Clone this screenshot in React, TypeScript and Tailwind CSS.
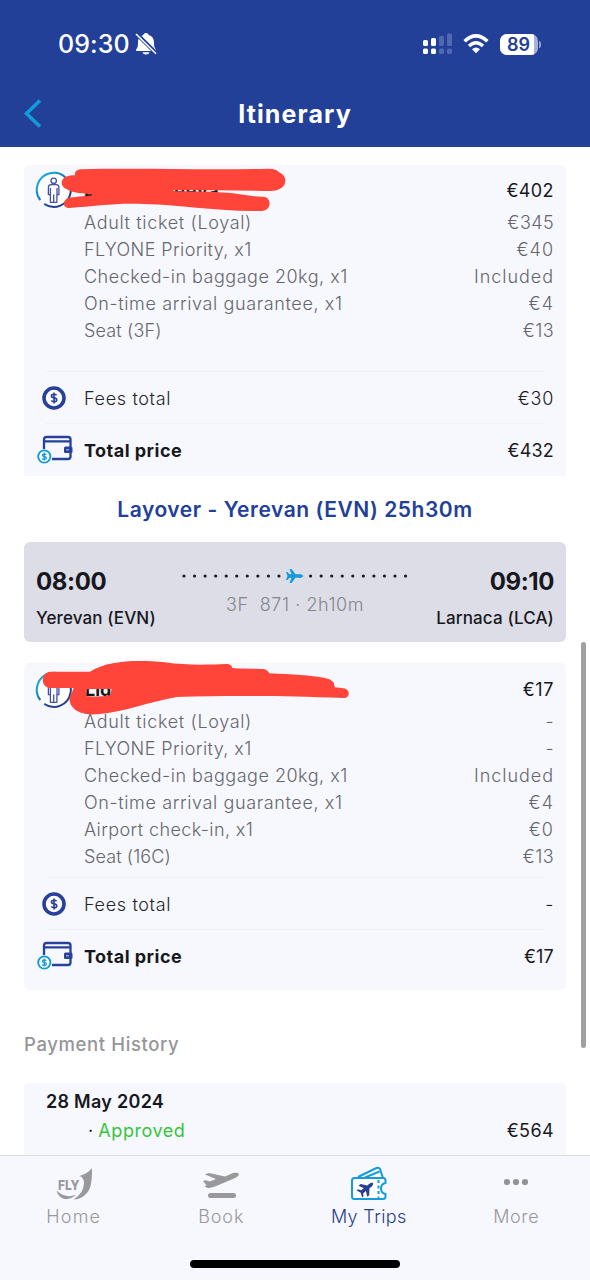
import React from "react";

type Line = { label: string; value: string; track?: string; valueTrack?: string };

function PersonIcon() {
  return (
    <svg width="38" height="38" viewBox="0 0 38 38" fill="none" className="shrink-0">
      <defs>
        <linearGradient id="ring" x1="0" y1="0" x2="1" y2="1">
          <stop offset="0.2" stopColor="#18a5d6" />
          <stop offset="0.7" stopColor="#27408f" />
        </linearGradient>
      </defs>
      <circle cx="19" cy="19" r="16" fill="#fff" />
      <path d="M5.3 29.2A17 17 0 1 1 9.2 32.9" stroke="url(#ring)" strokeWidth="2" />
      <g stroke="#4450a5" strokeWidth="1.3" strokeLinejoin="round">
        <circle cx="18.7" cy="9.8" r="2.7" />
        <path d="M16.2 13.7h5q2.700 0 2.700 2.800v7.200h-2v7.600h-6.500v-7.600h-2v-7.200q0-2.800 2.800-2.800ZM15.400 17v7M22 17v7M18.700 23.500v7.600" />
      </g>
    </svg>
  );
}

function CoinIcon() {
  return (
    <svg width="24" height="24" viewBox="0 0 24 24" fill="none">
      <circle cx="12" cy="12" r="10" fill="#fff" stroke="#27409b" strokeWidth="3.6" />
      <path d="M14.600 9.300q-.9-1.100-2.600-1.100c-3.500 0-3.500 3.200 0 3.700 3.700.5 3.700 3.900 0 3.900q-1.700 0-2.700-1.200M12 6.600v10.800" stroke="#27409b" strokeWidth="1.6" />
    </svg>
  );
}

function WalletIcon() {
  return (
    <svg width="37" height="30" viewBox="0 0 37 30" fill="none">
      <path d="M7 14V4.500Q7 2 9.500 2H31q2.500 0 2.500 2.500v17Q33.500 24 31 24H15M7 6.300h26" stroke="#27409b" strokeWidth="2.3" />
      <rect x="27" y="11.500" width="8.500" height="6.500" rx="1.500" fill="#27409b" />
      <rect x="29" y="14" width="3" height="1.500" fill="#8a98d0" />
      <circle cx="7.300" cy="21.500" r="6.100" fill="#fff" stroke="#139bd7" strokeWidth="1.900" />
      <path d="M9.300 19.700q-.7-.8-2-.8c-2.600 0-2.600 2.300 0 2.600 2.800.3 2.800 2.900 0 2.900q-1.400 0-2.200-.9M7.300 17.600v7.900" stroke="#139bd7" strokeWidth="1.300" />
    </svg>
  );
}

function Detail({ label, value, track = "tracking-[0.4px]", valueTrack = "tracking-[0.4px]" }: Line) {
  return (
    <div className="flex h-[27px] items-center justify-between pl-[60px] pr-[12px] text-[18px] font-light text-[#65666d]">
      <span className={track}>{label}</span>
      <span className={valueTrack}>{value}</span>
    </div>
  );
}

function Totals({ fees, total }: { fees: string; total: string }) {
  return (
    <>
      <div className="ml-[22px] mr-[21px] h-px bg-[#f0f1f7]" />
      <div className="flex h-[51px] items-center pl-[18px] pr-[12px] pt-px text-[18px]">
        <CoinIcon />
        <span className="ml-[18px] grow font-light tracking-[0.66px] text-[#25262b]">Fees total</span>
        <span className="font-light tracking-[0.7px] text-[#191a20]">{fees}</span>
      </div>
      <div className="ml-[22px] mr-[21px] h-px bg-[#f0f1f7]" />
      <div className="flex h-[52px] items-center pl-[13px] pr-[12px] text-[18px]">
        <WalletIcon />
        <span className="ml-[10px] grow font-bold tracking-[0.48px] text-[#17181d]">Total price</span>
        <span className="tracking-[0.2px] text-[#191a20]">{total}</span>
      </div>
    </>
  );
}

function Tab({ icon, label, active, track }: { icon: React.ReactNode; label: string; active?: boolean; track: string }) {
  return (
    <div className={`flex w-[147.500px] flex-col items-center ${active ? "text-[#293c92]" : "text-[#98989d]"}`}>
      <div className="flex h-[43px] items-end justify-center">{icon}</div>
      <div className={`mt-[2px] text-[18px] font-light leading-[26px] ${track}`}>{label}</div>
    </div>
  );
}

const first: Line[] = [
  { label: "Adult ticket (Loyal)", value: "€345", track: "tracking-[0.65px]" },
  { label: "FLYONE Priority, x1", value: "€40", track: "tracking-[0.42px]", valueTrack: "tracking-[1px]" },
  { label: "Checked-in baggage 20kg, x1", value: "Included", track: "tracking-[0.5px]", valueTrack: "tracking-[0.95px]" },
  { label: "On-time arrival guarantee, x1", value: "€4", track: "tracking-[0.62px]", valueTrack: "tracking-[1px]" },
  { label: "Seat (3F)", value: "€13", track: "tracking-[0.15px]" },
];

const second: Line[] = [
  { label: "Adult ticket (Loyal)", value: "-", track: "tracking-[0.65px]" },
  { label: "FLYONE Priority, x1", value: "-", track: "tracking-[0.42px]" },
  { label: "Checked-in baggage 20kg, x1", value: "Included", track: "tracking-[0.5px]", valueTrack: "tracking-[0.95px]" },
  { label: "On-time arrival guarantee, x1", value: "€4", track: "tracking-[0.62px]", valueTrack: "tracking-[1px]" },
  { label: "Airport check-in, x1", value: "€0", valueTrack: "tracking-[1px]" },
  { label: "Seat (16C)", value: "€13", track: "tracking-[0.1px]" },
];

export default function App() {
  return (
    <div className="flex h-[1280px] w-[590px] flex-col overflow-hidden bg-white font-['Inter',sans-serif] text-[#17181d]">
      <header className="h-[147px] shrink-0 bg-[#224098] text-white">
        <div className="flex h-[88px] items-center pl-[58px] pr-[49px]">
          <span className="text-[25px] font-medium leading-none tracking-[0.1px]">09:30</span>
          <svg width="22" height="24" viewBox="0 0 22 24" className="ml-[5px]">
            <path d="M11 1C9.200 1 8.500 2.200 8.400 3 4.300 4 3 7.500 3 10.500c0 4-.5 5-1.800 7-.5.800 0 1.500.8 1.500h18c.8 0 1.300-.7.8-1.500-1.300-2-1.800-3-1.800-7 0-3-1.300-6.500-5.400-7.500-.1-.8-.8-2-2.600-2ZM7.500 20.200h7c-.5 3-6.500 3-7 0Z" fill="#fff" />
            <path d="M1.500 1.800L21 21" stroke="#224098" strokeWidth="4" />
            <path d="M1 2L21 21.700" stroke="#fff" strokeWidth="1.600" />
          </svg>
          <div className="ml-auto flex items-center">
            <svg width="31" height="22" viewBox="0 0 31 22" fill="#fff">
              <rect x="1" y="7" width="5" height="6" rx="1.500" />
              <rect x="9" y="5" width="5" height="8" rx="1.500" />
              <rect x="1" y="15.500" width="5" height="5.500" rx="1.500" />
              <rect x="9" y="15.500" width="5" height="5.500" rx="1.500" />
              <g fill="#5068b2">
                <rect x="17" y="3" width="5" height="10" rx="1.500" />
                <rect x="25" y="0.500" width="5" height="12.500" rx="1.500" />
                <rect x="17" y="15.500" width="5" height="5.500" rx="1.500" />
                <rect x="25" y="15.500" width="5" height="5.500" rx="1.500" />
              </g>
            </svg>
            <svg width="26" height="20" viewBox="0 0 26 20" fill="none" stroke="#fff" strokeWidth="3.400" className="ml-[10px]">
              <path d="M1.600 7.200Q13-3.500 24.400 7.200M6 12Q13 5.500 20 12" />
              <path d="M9 15.200q4-3.300 8 0l-4 4Z" fill="#fff" stroke="none" />
            </svg>
            <div className="ml-[11px] flex h-[21px] w-[38px] items-center overflow-hidden rounded-[7px] bg-[#a6b2da]">
              <div className="flex h-full w-[34px] items-center justify-center bg-white pl-[3px] text-[18px] font-semibold text-[#224098]">89</div>
            </div>
            <div className="ml-[1px] h-[7px] w-[2px] rounded-r-full bg-[#91a1ce]" />
          </div>
        </div>
        <div className="grid h-[52px] grid-cols-[80px_1fr_80px] items-center">
          <svg width="20" height="32" viewBox="0 0 20 32" fill="none" className="ml-[23px]">
            <path d="M17 2.500L3.500 15.500l13.500 13" stroke="#129bd9" strokeWidth="3.600" />
          </svg>
          <h1 className="pt-[2px] text-center text-[25px] font-bold tracking-[1.1px]">Itinerary</h1>
        </div>
      </header>

      <main className="relative h-[1008px] shrink-0 overflow-hidden px-[24px] pt-[18px]">
        <section className="relative h-[311px] rounded-t-[5px] bg-[#f7f8fe]">
          <div className="flex h-[44px] items-center pb-[1px] pl-[11px] pr-[12px] pt-[7px]">
            <PersonIcon />
            <span className="ml-[11px] text-[18px] font-bold">L</span>
            <span className="ml-[80px] text-[18px] font-bold tracking-[0.8px]">eeva</span>
            <span className="ml-auto text-[18px] tracking-[0.4px]">€402</span>
          </div>
          {first.map((l) => <Detail key={l.label} {...l} />)}
          <div className="h-[27px]" />
          <Totals fees="€30" total="€432" />
          <svg className="absolute -left-[4px] -top-[10px]" width="290" height="70" viewBox="0 0 870 210">
            <path fill="#ff453a" d="M165 61Q162 46 182 43C350 38 560 46 740 41Q770 40 777 52C808 64 803 108 750 108C650 106 550 105 462 105Q456 107 466 109C540 109 600 111 640 115C675 120 700 125 728 125C755 124 758 167 724 168C600 171 500 150 370 147C280 144 225 154 149 159C127 159 126 138 145 128L194 123V119L215 117C172 114 156 112 145 105C111 94 122 57 165 61Z" />
            <path d="M197 117.500h19v3l-19 3Z" fill="#17181d" />
          </svg>
        </section>

        <h2 className="flex h-[66px] items-center justify-center pt-[2px] text-[21px] font-semibold tracking-[0.54px] text-[#224098]">Layover - Yerevan (EVN) 25h30m</h2>

        <section className="flex h-[100px] justify-between rounded-[6px] bg-[#dddde7] px-[12px] pt-[23px]">
          <div className="w-[130px]">
            <div className="pt-px text-[24px] font-bold leading-[32px] tracking-[-0.35px]">08:00</div>
            <div className="mt-[8px] text-[17px] font-medium leading-[24px] tracking-[0.12px]">Yerevan (EVN)</div>
          </div>
          <div className="flex flex-col items-center">
            <svg width="228" height="20" viewBox="0 0 228 20">
              {Array.from({ length: 22 }, (_, i) => <circle key={i} cx={3 + i * 10.55} cy="11" r="1.600" fill="#191a20" />)}
              <g transform="translate(113.500 11)" fill="#149bda">
                <path d="M9 0Q8-1.700 5-1.700H1L-3-7h-2L-3-1.700h-2L-7-4h-1.500L-7 0-8.500 4H-7l2-2.300h2L-5 7h2L1 1.700H5Q8 1.700 9 0Z" />
              </g>
            </svg>
            <div className="mt-[6px] whitespace-pre text-[18px] font-light leading-[27px] tracking-[0.55px] text-[#85858d]">3F  871 · 2h10m</div>
          </div>
          <div className="w-[130px] text-right">
            <div className="pt-px text-[24px] font-bold leading-[32px] tracking-[-0.4px]">09:10</div>
            <div className="mt-[8px] text-[17px] font-medium leading-[24px] tracking-[0.14px]">Larnaca (LCA)</div>
          </div>
        </section>

        <section className="relative mt-[21px] h-[327px] rounded-[5px] bg-[#f7f8fe]">
          <div className="flex h-[45px] items-center pl-[11px] pr-[12px] pt-[8px]">
            <PersonIcon />
            <span className="ml-[12px] text-[18px] font-bold">Lid</span>
            <span className="ml-auto text-[18px] tracking-[0.6px]">€17</span>
          </div>
          {second.map((l) => <Detail key={l.label} {...l} />)}
          <div className="h-[7px]" />
          <Totals fees="-" total="€17" />
          <svg className="absolute -left-[4px] -top-[13px]" width="350" height="70" viewBox="0 0 1050 210">
            <path fill="#ff453a" fillRule="evenodd" d="M91 65H210C270 28 360 31 435 37C500 47 570 44 618 42Q634 41 637 54C675 57 710 55 735 58Q745 62 748 70C820 73 870 76 915 84Q946 90 944 112L965 114C992 114 993 144 970 144C760 136 610 137 470 141C380 157 310 187 230 193C158 198 137 155 155 130L161 114H92C61 113 60 68 91 65ZM202 117L198 138Q235 142 270 136L275 117Z" />
          </svg>
        </section>

        <h3 className="flex h-[93px] items-center pt-[16px] text-[18.500px] font-medium tracking-[0.62px] text-[#95959a]">Payment History</h3>

        <section className="h-[72px] rounded-t-[5px] bg-[#f7f8fe] pl-[22px] pr-[12px] pt-[5px]">
          <div className="text-[18px] font-semibold leading-[27px] tracking-[0.28px]">28 May 2024</div>
          <div className="mt-[2px] flex justify-between text-[18px] leading-[27px]">
            <span className="ml-[42px] tracking-[0.55px] text-[#35c53b]"><span className="-mr-[1px] text-[#17181d]">·</span> Approved</span>
            <span className="tracking-[0.4px]">€564</span>
          </div>
        </section>
        <div className="absolute right-[4px] top-[495px] h-[406px] w-[5px] rounded-full bg-[#a0a0a2]" />
      </main>

      <nav className="relative flex h-[125px] shrink-0 border-t border-[#dadbe0] bg-[#f7f8fe] pt-[3px]">
        <Tab label="Home" track="tracking-[1.2px]" icon={
          <svg width="38" height="34" viewBox="0 0 38 34" fill="#99999c" className="mb-[1px]">
            <text x="2.900" y="22.500" fontFamily="Inter" fontSize="13.500" fontWeight="800" textLength="21.500" lengthAdjust="spacingAndGlyphs">FLY</text>
            <path d="M36.900 1Q33 6.500 24.500 9Q28.500 10 29 15.500Q29 26 18.600 32.500Q27 32 32 26Q37.500 20 36.900 1ZM1.500 23.500Q10.500 32 21 27.800Q15 33 9.500 32Q3.500 30.500 1.500 23.500Z" />
          </svg>} />
        <Tab label="Book" track="tracking-[0.9px]" icon={
          <svg width="38" height="32" viewBox="0 0 38 32" fill="#99999c" className="mb-px">
            <path d="M1 12l2.500-.8 4.500 1.300 6-2.500L2.500 5.300 7 4l16 3.500 8-3.500q5-1 6 1 0 2-5 4.500L13 17.500q-5 2-8 1.300l-2.500-1.600 2-1Z" />
            <rect x="6" y="24" width="28" height="5" rx="2.500" />
          </svg>} />
        <Tab label="My Trips" active track="tracking-[0.35px]" icon={
          <svg width="38" height="37" viewBox="0 0 38 37" fill="none">
            <path d="M8 12L26.500 3q2.500-1 3.500 1.200L33 13" fill="#fff" stroke="#159bd8" strokeWidth="2" />
            <path d="M15 12.500L29.500 6.500" stroke="#159bd8" strokeWidth="1.900" />
            <path d="M4.500 13H33q2.500 0 2.500 2.500V18q-4.500 1-4.500 5.500t4.500 5.500v2.500Q35.500 34 33 34H4.500Q2 34 2 31.500v-16Q2 13 4.500 13Z" fill="#fff" stroke="#159bd8" strokeWidth="2" />
            <path d="M28.500 15v18" stroke="#159bd8" strokeWidth="2" strokeDasharray="3 2.500" />
            <g transform="translate(16.300 23.500) rotate(-38) scale(0.88)">
              <path d="M10 0Q9-2 6-2H3L-2-8h-3L-2-2h-4L-8-5h-2L-8 0-10 5h2L-6 2h4L-5 8h3L3 2H6Q9 2 10 0Z" fill="#27408f" />
            </g>
          </svg>} />
        <Tab label="More" track="tracking-[0.6px]" icon={
          <svg width="26" height="8" viewBox="0 0 26 8" fill="#929296" className="mb-[16px]">
            <circle cx="4" cy="4" r="3.100" /><circle cx="13" cy="4" r="3.100" /><circle cx="22" cy="4" r="3.100" />
          </svg>} />
        <div className="absolute bottom-[12px] left-[190px] h-[8px] w-[210px] rounded-full bg-black" />
      </nav>
    </div>
  );
}
